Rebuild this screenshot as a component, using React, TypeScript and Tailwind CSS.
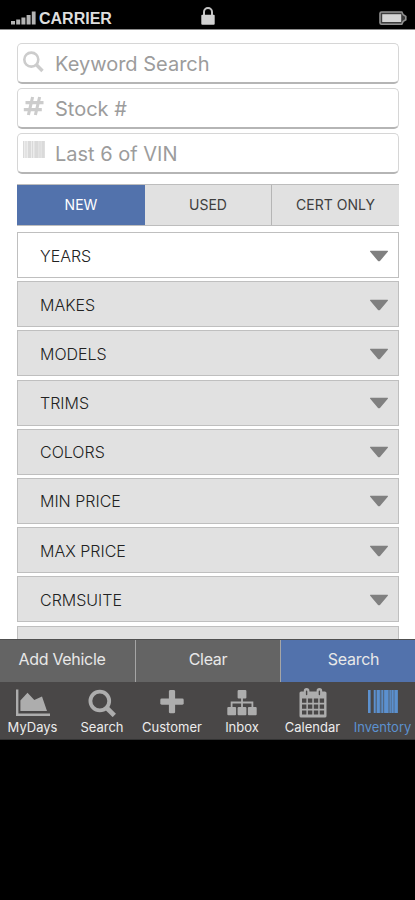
import type { ReactNode } from 'react';
import clsx from 'clsx';

interface SearchField {
  label: string;
  icon: ReactNode;
}

interface FilterRow {
  label: string;
  active?: boolean;
}

interface NavItem {
  label: string;
  icon: ReactNode;
  width: string;
  active?: boolean;
}

const searchFields: SearchField[] = [
  {
    label: 'Keyword Search',
    icon: (
      <svg viewBox="0 0 24 24" className="w-6 h-6" fill="none" stroke="#cccccc">
        <circle cx="9.3" cy="9.6" r="7" strokeWidth="2.6" />
        <path d="M14.4 14.8 20.5 21" strokeWidth="3.4" />
      </svg>
    ),
  },
  {
    label: 'Stock #',
    icon: (
      <svg viewBox="0 0 24 24" className="w-6 h-6" fill="none" stroke="#cccccc" strokeWidth="3.1">
        <path d="M10.6 2 6.4 20M17.6 2l-4.2 18M3.5 7.6h18M1.8 14.6h18" />
      </svg>
    ),
  },
  {
    label: 'Last 6 of VIN',
    icon: (
      <svg viewBox="0 0 24 24" className="w-6 h-6" fill="#dadada">
        <path d="M1 1h1v17H1zM3.5 1h1v17h-1zM6 1h3v17H6zM10 1h1v17h-1zM12.5 1h4v17h-4zM17.3 1h1.4v17h-1.4zM19.5 1h3.2v17h-3.2z" />
        <path d="M1 1h22v17H1z" opacity=".5" />
      </svg>
    ),
  },
];

const filterRows: FilterRow[] = [
  { label: 'YEARS', active: true },
  { label: 'MAKES' },
  { label: 'MODELS' },
  { label: 'TRIMS' },
  { label: 'COLORS' },
  { label: 'MIN PRICE' },
  { label: 'MAX PRICE' },
  { label: 'CRMSUITE' },
  { label: '' },
];

const navItems: NavItem[] = [
  {
    label: 'MyDays',
    width: 'w-[65px]',
    icon: (
      <svg viewBox="0 0 34 28" className="w-[34px] h-7" fill="currentColor">
        <path d="M0 .5h2.4v24h31.6v2.5H0z" />
        <path d="M4.4 22V11.500L11.500 3.800l6.800 7.200 7.700-3.400 5 14.400z" />
      </svg>
    ),
  },
  {
    label: 'Search',
    width: 'w-[74px]',
    icon: (
      <svg viewBox="0 0 28 28" className="w-7 h-7" fill="none" stroke="currentColor">
        <circle cx="11.8" cy="12" r="9.4" strokeWidth="3.8" />
        <path d="m18.300 18.500 8 8" strokeWidth="4.6" />
      </svg>
    ),
  },
  {
    label: 'Customer',
    width: 'w-[66px]',
    icon: (
      <svg viewBox="0 0 28 28" className="w-7 h-7" fill="currentColor">
        <rect x="10.9" y="1" width="6.2" height="23.3" rx="1.4" />
        <rect x="2.3" y="9.5" width="23.4" height="6.2" rx="1.4" />
      </svg>
    ),
  },
  {
    label: 'Inbox',
    width: 'w-[74px]',
    icon: (
      <svg viewBox="0 0 30 28" className="w-[30px] h-7" fill="currentColor">
        <rect x="10.6" y="1" width="8.8" height="8.5" rx="1" />
        <rect x="0.3" y="18" width="8.8" height="8.3" rx="1" />
        <rect x="10.6" y="18" width="8.8" height="8.3" rx="1" />
        <rect x="20.9" y="18" width="8.8" height="8.3" rx="1" />
        <path d="M4.6 18v-4.5h20.800V18M15 9v9" fill="none" stroke="currentColor" strokeWidth="1.8" />
      </svg>
    ),
  },
  {
    label: 'Calendar',
    width: 'w-[67px]',
    icon: (
      <svg viewBox="0 0 28 30" className="-mt-px w-7 h-[30px]" fill="currentColor">
        <rect x="0.5" y="3.5" width="27" height="26" rx="1.6" />
        <rect x="4.8" y="0" width="5.6" height="9" rx="2.8" />
        <rect x="17.6" y="0" width="5.6" height="9" rx="2.8" />
        <path
          d="M7.6 3.300v3.200M20.4 3.300v3.200"
          stroke="#494747"
          strokeWidth="1.4"
          strokeLinecap="round"
        />
        <path
          d="M3 10.6h4.4v4.2H3zM8.9 10.6h4.4v4.2H8.9zM14.8 10.6h4.4v4.2h-4.4zM20.7 10.6h4.4v4.2h-4.4zM3 16.5h4.4v4.2H3zM8.9 16.5h4.4v4.2H8.9zM14.8 16.5h4.4v4.2h-4.4zM20.7 16.5h4.4v4.2h-4.4zM3 22.4h4.4v4.2H3zM8.9 22.4h4.4v4.2H8.9zM14.8 22.4h4.4v4.2h-4.4zM20.7 22.4h4.4v4.2h-4.4z"
          fill="#494747"
        />
      </svg>
    ),
  },
  {
    label: 'Inventory',
    width: 'w-[69px] pl-1',
    active: true,
    icon: (
      <svg viewBox="0 0 30 28" className="w-[30px] h-7" fill="currentColor">
        <path d="M0 1h2.6v23H0zM5.8 1h1.7v23H5.8zM9 1h2.8v23H9zM13.5 1h1.4v23h-1.4zM16.2 1h4.2v23h-4.2zM21.6 1h1.2v23h-1.2zM23.6 1h2v23h-2zM26.5 1h3.3v23h-3.3z" />
        <path d="M5.8 1h24v23h-24z" opacity=".45" />
      </svg>
    ),
  },
];

function StatusBar() {
  return (
    <header className="grid grid-cols-3 h-[30px] shrink-0 bg-black border-b border-[#8c8c8c] text-[#dedede]">
      <div className="flex items-start pl-[11px] pt-[9px]">
        <svg viewBox="0 0 26 18" className="w-[26px] h-[18px] shrink-0" fill="#b4b4b4">
          <path d="M0 12h4v3.5H0zM5.2 10.5h4v5h-4zM10.4 8.5h4v7h-4zM15.6 6h4v9.5h-4zM20.8 2.5h3.8v13h-3.8z" />
        </svg>
        <span className="ml-[2px] font-['Liberation_Sans'] font-bold text-[16px] leading-[19px]">
          CARRIER
        </span>
      </div>
      <div className="flex justify-center pl-[2px] pt-[7px]">
        <svg viewBox="0 0 14 18" className="w-[14px] h-[18px]">
          <path d="M3 9V5a4 4 0 0 1 8 0v4" fill="none" stroke="#c4c4c4" strokeWidth="2" />
          <rect x="0.3" y="7.7" width="13.4" height="10" rx="1" fill="#d2d2d2" />
        </svg>
      </div>
      <div className="flex justify-end pr-2 pt-[11px]">
        <svg viewBox="0 0 28 14" className="w-7 h-[14px]">
          <path
            d="M2.5 1h20.3l1.4 2.8 2.6 1.6v3.4l-2.6 1.6-1.4 2.8H2.5Q1 13.2 1 11.7V2.5Q1 1 2.5 1z"
            fill="#3c3c3c"
            stroke="#929292"
            strokeWidth="1.6"
          />
          <rect x="3.2" y="3.2" width="19" height="7.8" fill="#d4d4d4" />
        </svg>
      </div>
    </header>
  );
}

export default function App() {
  return (
    <div className="flex flex-col h-[900px] w-[415px] overflow-hidden bg-black font-['Inter',sans-serif]">
      <StatusBar />

      <main className="h-[609px] shrink-0 overflow-hidden bg-white pl-[17px] pr-4 pt-[13px]">
        {/* Text fields */}
        <div className="flex flex-col gap-1">
          {searchFields.map(field => (
            <div
              key={field.label}
              className="flex h-[41px] rounded-[5px] border border-b-2 border-[#d6d6d6] border-b-[#b5b5b5] bg-white pl-1 pt-[6px]"
            >
              {field.icon}
              <span className="ml-[9px] text-[20px] leading-7 text-[#9c9c9c]">
                {field.label}
              </span>
            </div>
          ))}
        </div>

        {/* Condition toggle */}
        <div className="mt-[10px] grid grid-cols-[128px_127px_127px] h-[42px] text-[14px] leading-none text-[#3e3e3e] bg-[#e1e1e1] border-y border-[#bdbdbd]">
          <div className="flex items-center justify-center bg-[#5272ac] text-white">NEW</div>
          <div className="flex items-center justify-center border-r border-[#b5b5b5]">USED</div>
          <div className="flex items-center justify-center">CERT ONLY</div>
        </div>

        {/* Filters */}
        <div className="mt-[6px] flex flex-col gap-[3.2px]">
          {filterRows.map(row => (
            <div
              key={row.label}
              className={clsx(
                'flex h-[46px] items-center justify-between border border-[#bfbfbf] pl-[22px] pr-[9px] pt-px',
                row.active ? 'bg-white' : 'bg-[#e1e1e1]'
              )}
            >
              <span className="text-[16px] font-light leading-none text-[#222]">{row.label}</span>
              <svg viewBox="0 0 20 12" className="w-5 h-3" fill="#808080">
                <path d="M1.5.8h17q1 0 .3.9l-7.6 9q-1.2 1.2-2.4 0l-7.6-9q-.7-.9.3-.9z" />
              </svg>
            </div>
          ))}
        </div>
      </main>

      {/* Actions */}
      <div className="flex h-[43px] shrink-0 bg-[#646464] text-[16px] leading-none text-[#e8e8e8] tracking-[-0.3px] border-t border-[#505050]">
        <div className="flex w-[136px] items-center justify-center border-r border-[#a5a5a5] pb-[5px] pr-[11px]">
          Add Vehicle
        </div>
        <div className="flex w-[145px] items-center justify-center border-r border-[#a5a5a5] pb-[5px]">Clear</div>
        <div className="flex flex-1 items-center justify-center bg-[#5272ac] pb-[5px] pl-[11px]">Search</div>
      </div>

      {/* Tab bar */}
      <nav className="flex h-[58px] shrink-0 bg-[#494747] border-b border-[#333]">
        {navItems.map(item => (
          <div
            key={item.label}
            className={clsx(
              'flex flex-col items-center pt-[7px]',
              item.width,
              item.active ? 'text-[#5c91cf]' : 'text-[#adadad]'
            )}
          >
            <div className="flex h-[30px] items-start">{item.icon}</div>
            <span
              className={clsx(
                'whitespace-nowrap text-[13px] leading-4',
                !item.active && 'text-[#ececec]'
              )}
            >
              {item.label}
            </span>
          </div>
        ))}
      </nav>
    </div>
  );
}
